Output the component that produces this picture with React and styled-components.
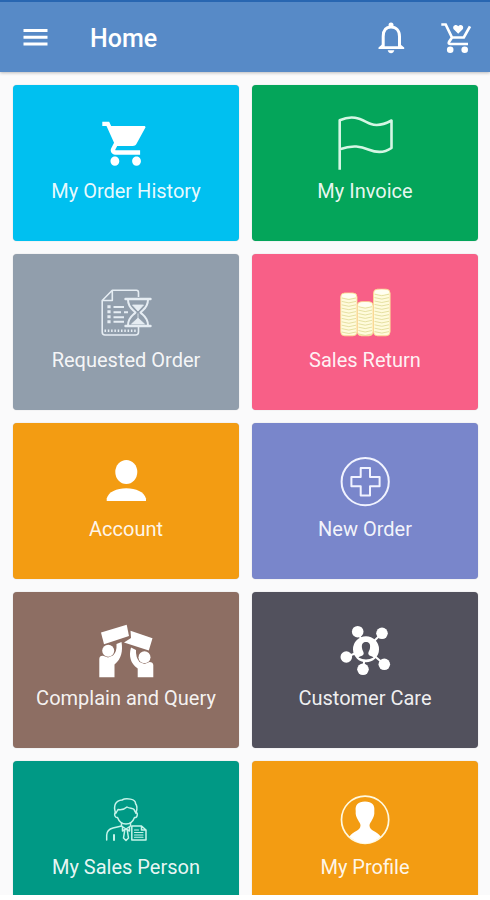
import React from 'react';
import styled, { createGlobalStyle } from 'styled-components';

const GlobalStyle = createGlobalStyle`
  body {
    margin: 0;
    background: #fff;
    font-family: Roboto, 'Liberation Sans', sans-serif;
  }
`;

const Screen = styled.div`
  display: flex;
  flex-direction: column;
  width: 490px;
  height: 895px;
  overflow: hidden;
  background: #fafafb;
`;

const Header = styled.header`
  display: flex;
  align-items: center;
  flex: none;
  box-sizing: border-box;
  height: 72px;
  padding: 2px 17px 0 23px;
  border-top: 2px solid #2866b1;
  background: #578ac7;
  box-shadow: 0 1px 3px rgba(0, 0, 0, 0.25);
`;

const Title = styled.h1`
  flex: 1;
  margin: 2px 0 0 42px;
  font-size: 25px;
  line-height: 28px;
  font-weight: 500;
  color: #fff;
`;

const HeaderIcon = styled.svg`
  display: block;
  flex: none;
  margin-left: ${props => props.$gap || 0}px;
`;

const Grid = styled.main`
  display: grid;
  flex: none;
  grid-template-columns: 226px 226px;
  grid-auto-rows: 156px;
  gap: 13px;
  padding: 13.4px 12px 0 13px;
`;

const Card = styled.div`
  display: flex;
  flex-direction: column;
  align-items: center;
  box-sizing: border-box;
  padding-top: 27px;
  border-radius: 4px;
  background: ${props => props.$color};
  box-shadow: 0 0 1px rgba(0, 0, 0, 0.3);
`;

const CardIcon = styled.svg`
  display: block;
  width: 60px;
  height: 60px;
`;

const Label = styled.span`
  margin-top: 7px;
  font-size: 20px;
  line-height: 24px;
  color: rgba(255, 255, 255, 0.93);
  white-space: nowrap;
`;

const CartIcon = () => (
  <g fill="#fff" transform="translate(4.2 5.3) scale(2.1 2.2)">
    <path d="M7 17.850c-1.150 0-2.100.95-2.100 2.100S5.850 22 7 22s2.100-.9 2.100-2.050-.95-2.100-2.100-2.100zM1 2v2h2l3.6 7.59-1.35 2.45c-.16.28-.25.61-.25.96 0 1.1.9 2 2 2h12v-2H7.42c-.14 0-.25-.11-.25-.25l.03-.12.9-1.63h7.45c.75 0 1.41-.41 1.75-1.03l4.300-7.500A1 1 0 0 0 21.200 4H5.21l-.94-2H1zm16.300 15.850c-1.150 0-2.100.95-2.100 2.100s.95 2.050 2.100 2.050 2.100-.9 2.100-2.050-.95-2.100-2.100-2.100z" />
  </g>
);

const FlagIcon = () => (
  <path
    d="M4.7 57.7V8.3C20 1.500 28 9 36 12C43 14.500 50 12 56.500 8.500V36C50 40.500 42 41 34 37.700C26 34.500 18 32.500 4.700 37.300"
    fill="none" stroke="#d5f6e4" strokeWidth="2.6" strokeLinejoin="round"
  />
);

const RequestIcon = () => (
  <g fill="none" stroke="#e6edf3" strokeWidth="1.6" strokeLinejoin="round">
    <path d="M42.500 16V11.500Q42.500 9.200 40.500 9.200H16.300L6.200 19.500V51Q6.200 54 9 54H39.500Q42.500 54 42.500 51V46M16.300 9.200V19.500H6.200" />
    <path d="M17.500 26H28M17.500 31.300H25M28 31.300H32M17.500 36.300H28M17.500 40.700H28" strokeWidth="2" />
    <path d="M13 24.300V42.500" strokeWidth="3.200" strokeDasharray="3 2" />
    <path d="M8.500 49.700H40.500" strokeWidth="2.600" strokeDasharray="1.500 1.800" />
    <path d="M29.500 18H54.500M29.500 45H54.500" strokeWidth="2.400" strokeLinecap="round" />
    <path d="M32 18.500C32 27 37 28.500 39.500 31.500C37 34.500 32 36 32 44.500M52 18.500C52 27 47 28.500 44.500 31.500C47 34.500 52 36 52 44.500" strokeWidth="2" />
    <path d="M36.500 24H47.500L42 30ZM42 32.500V37L35.500 43H48.500L42 37" fill="#e6edf3" strokeWidth="0.800" />
  </g>
);

const coinColumns = [
  { x: 5.700, width: 16.300, top: 12 },
  { x: 22.400, width: 15.600, top: 20.700 },
  { x: 38.500, width: 16.600, top: 8.200 },
];

const coinEdges = (top) => {
  const edges = [];
  for (let y = top + 5; y < 53; y += 3.400) edges.push(y);
  return edges;
};

const CoinsIcon = () => (
  <g>
    {coinColumns.map(({ x, width, top }) => (
      <g key={x}>
        <rect x={x} y={top} width={width} height={54.800 - top} rx="4" fill="#fffbdc" stroke="#f9d992" strokeWidth="0.900" />
        {coinEdges(top).map(y => (
          <path key={y} d={`M${x + 1} ${y}q${width / 2 - 1} 3 ${width - 2} 0`} fill="none" stroke="#e2dc9b" strokeWidth="0.900" />
        ))}
        <ellipse cx={x + width / 2} cy={top + 2.800} rx={width / 2 - 1} ry="2.400" fill="#fffef2" />
      </g>
    ))}
  </g>
);

const AccountIcon = () => (
  <g fill="#fff">
    <ellipse cx="30.300" cy="21.900" rx="11" ry="12" />
    <path d="M10.700 51V48.500C12.500 42 20.500 38.300 30.300 38.300S48 42 50 48.500V51Z" />
  </g>
);

const PlusIcon = () => (
  <g fill="none" stroke="#f1f3ff" strokeWidth="2" strokeLinejoin="round">
    <circle cx="30.200" cy="31.700" r="23.600" />
    <path d="M25.700 17.900H35V27.100H44.600V36.200H35V45.600H25.700V36.200H16.400V27.100H25.700Z" />
  </g>
);

const ComplainIcon = () => (
  <g fill="#fff">
    <path d="M5 13.500L30.700 5.700L33 17L8 25.300Z" />
    <path d="M34.500 11.700L56.500 19.300L52.800 31.500L28 23.500L35 19Z" />
    <circle cx="12.200" cy="31.700" r="6" />
    <circle cx="48.500" cy="38.300" r="6" />
    <path d="M3.300 58.300V40Q3.500 36.500 7 36.800L12 38.500L17 36.500Q21 33 20.500 25L25.500 23C27 32 25.500 40 18.500 45.500V58.300Z" />
    <path d="M57.300 58.300V46Q57 43 53.500 43L48.500 45L43.500 43Q39.500 38 40 31L35 28.500C32.500 37 34.500 44.500 41.700 49.500V58.300Z" />
  </g>
);

const CareIcon = () => (
  <g fill="#fff">
    <path d="M22.700 12.700L31 30L47 14.300M11.300 38L31 30L49.300 45.300M31 30L28 50.300" fill="none" stroke="#fff" strokeWidth="2" />
    <circle cx="22.700" cy="12.700" r="5.800" />
    <circle cx="47" cy="14.300" r="5.800" />
    <circle cx="11.300" cy="38" r="5.800" />
    <circle cx="49.300" cy="45.300" r="5.800" />
    <circle cx="28" cy="50.300" r="5.800" />
    <circle cx="31" cy="30.300" r="13" />
    <path d="M31 23C27.500 23 26.500 25.500 27 29C27.300 31.500 28.800 32.500 28.700 35C28 37 25 37 23.500 38.500Q31 42.500 38.500 38.500C37 37 34 37 33.300 35C33.200 32.500 34.700 31.500 35 29C35.500 25.500 34.500 23 31 23Z" fill="#52515d" />
  </g>
);

const SalesPersonIcon = () => (
  <g fill="none" stroke="#c6f3e9" strokeWidth="1.500" strokeLinecap="round" strokeLinejoin="round">
    <path d="M19.500 25C17 17 20 12.500 26 12C30 9.500 40 11 39.500 15.500C41.500 18 41 22 40 25" />
    <path d="M20 25L22 21.500C26 22 29 21 31 19C34 21 38 19.500 38.500 22.500L40 25" />
    <path d="M20 24.500Q18 25 19 28Q20 30 21.500 29.500C23 33.500 26.500 36 30 36S37 33.500 38.500 29.500Q40.500 30 41 28Q42 25 40 24.500" />
    <path d="M25.500 35V38L17 40Q11 41.500 10.700 47V52M34.500 35V37.500" />
    <path d="M25.500 38L30 41L34.500 38M26.500 39V43L30 41L33.500 43V39M28.800 42L27.500 50L30 52.500L32.500 50L31.200 42" />
    <path d="M18 47V52" strokeWidth="2" />
    <path d="M35.800 52V38H45.500L50 42V52H35.800M45.500 38V42H50" />
    <path d="M38.500 42H42.500M38.500 44.500H47M38.500 47H47M38.500 49.300H47" strokeWidth="1.100" />
  </g>
);

const ProfileIcon = () => (
  <g>
    <circle cx="30.100" cy="31.700" r="23.600" fill="none" stroke="#fff9df" strokeWidth="1.700" />
    <path
      d="M30 13.500C23 13.500 20 17 20.700 23C20.300 27 21.500 29.500 23 32C24 34 25.500 35.500 25.500 37.500C25.500 43 18 43 14.500 48.500Q21 55.300 30.100 55.300T45.700 48.500C42 43 34.500 43 34.500 37.500C34.500 35.500 36 34 37 32C38.500 29.500 39.700 27 39.300 23C40 17 37 13.500 30 13.500Z"
      fill="#fff"
    />
  </g>
);

const items = [
  { label: 'My Order History', color: '#00c0f0', Icon: CartIcon },
  { label: 'My Invoice', color: '#04a55a', Icon: FlagIcon },
  { label: 'Requested Order', color: '#919eac', Icon: RequestIcon },
  { label: 'Sales Return', color: '#f85f87', Icon: CoinsIcon },
  { label: 'Account', color: '#f39c12', Icon: AccountIcon },
  { label: 'New Order', color: '#7986cb', Icon: PlusIcon },
  { label: 'Complain and Query', color: '#8d6e63', Icon: ComplainIcon },
  { label: 'Customer Care', color: '#52515d', Icon: CareIcon },
  { label: 'My Sales Person', color: '#009985', Icon: SalesPersonIcon },
  { label: 'My Profile', color: '#f39c12', Icon: ProfileIcon },
];

export default function App() {
  return (
    <>
      <GlobalStyle />
      <Screen>
        <Header>
          <HeaderIcon width="25" height="34" viewBox="0 0 25 34">
            <path d="M0.500 9.500H24.500M0.500 16.300H24.500M0.500 23H24.500" stroke="#fff" strokeWidth="2.900" />
          </HeaderIcon>
          <Title>Home</Title>
          <HeaderIcon width="34" height="34" viewBox="0 0 34 34">
            <path d="M9.200 26V15.500C9.200 9.500 12 6 17 6S25.500 9.500 25.500 15.500V26" fill="none" stroke="#fff" strokeWidth="3" />
            <path d="M4.500 28V26.500L8 23.500V25.300H26.500V23.500L30.200 26.500V28Z" fill="#fff" />
            <circle cx="17" cy="4" r="2.500" fill="#fff" />
            <path d="M13.700 29.300H20.300Q19.500 32.300 17 32.300T13.700 29.300Z" fill="#fff" />
          </HeaderIcon>
          <HeaderIcon width="34" height="34" viewBox="0 0 34 34" $gap={31}>
            <path d="M2.300 3.500H6.700L13 16.500H24.800L31 5.300M13 16.500L10 21Q9 23 11.500 23H29" fill="none" stroke="#fff" strokeWidth="2.700" />
            <circle cx="11.200" cy="28.800" r="3.300" fill="#fff" />
            <circle cx="25.700" cy="28.800" r="3.300" fill="#fff" />
            <path d="M19.200 12.800L14.700 8.300C12.800 5.500 16.500 2.300 19.200 5.200C21.900 2.300 25.600 5.500 23.700 8.300Z" fill="#fff" />
          </HeaderIcon>
        </Header>
        <Grid>
          {items.map(({ label, color, Icon }) => (
            <Card key={label} $color={color}>
              <CardIcon viewBox="0 0 60 60"><Icon /></CardIcon>
              <Label>{label}</Label>
            </Card>
          ))}
        </Grid>
      </Screen>
    </>
  );
}
